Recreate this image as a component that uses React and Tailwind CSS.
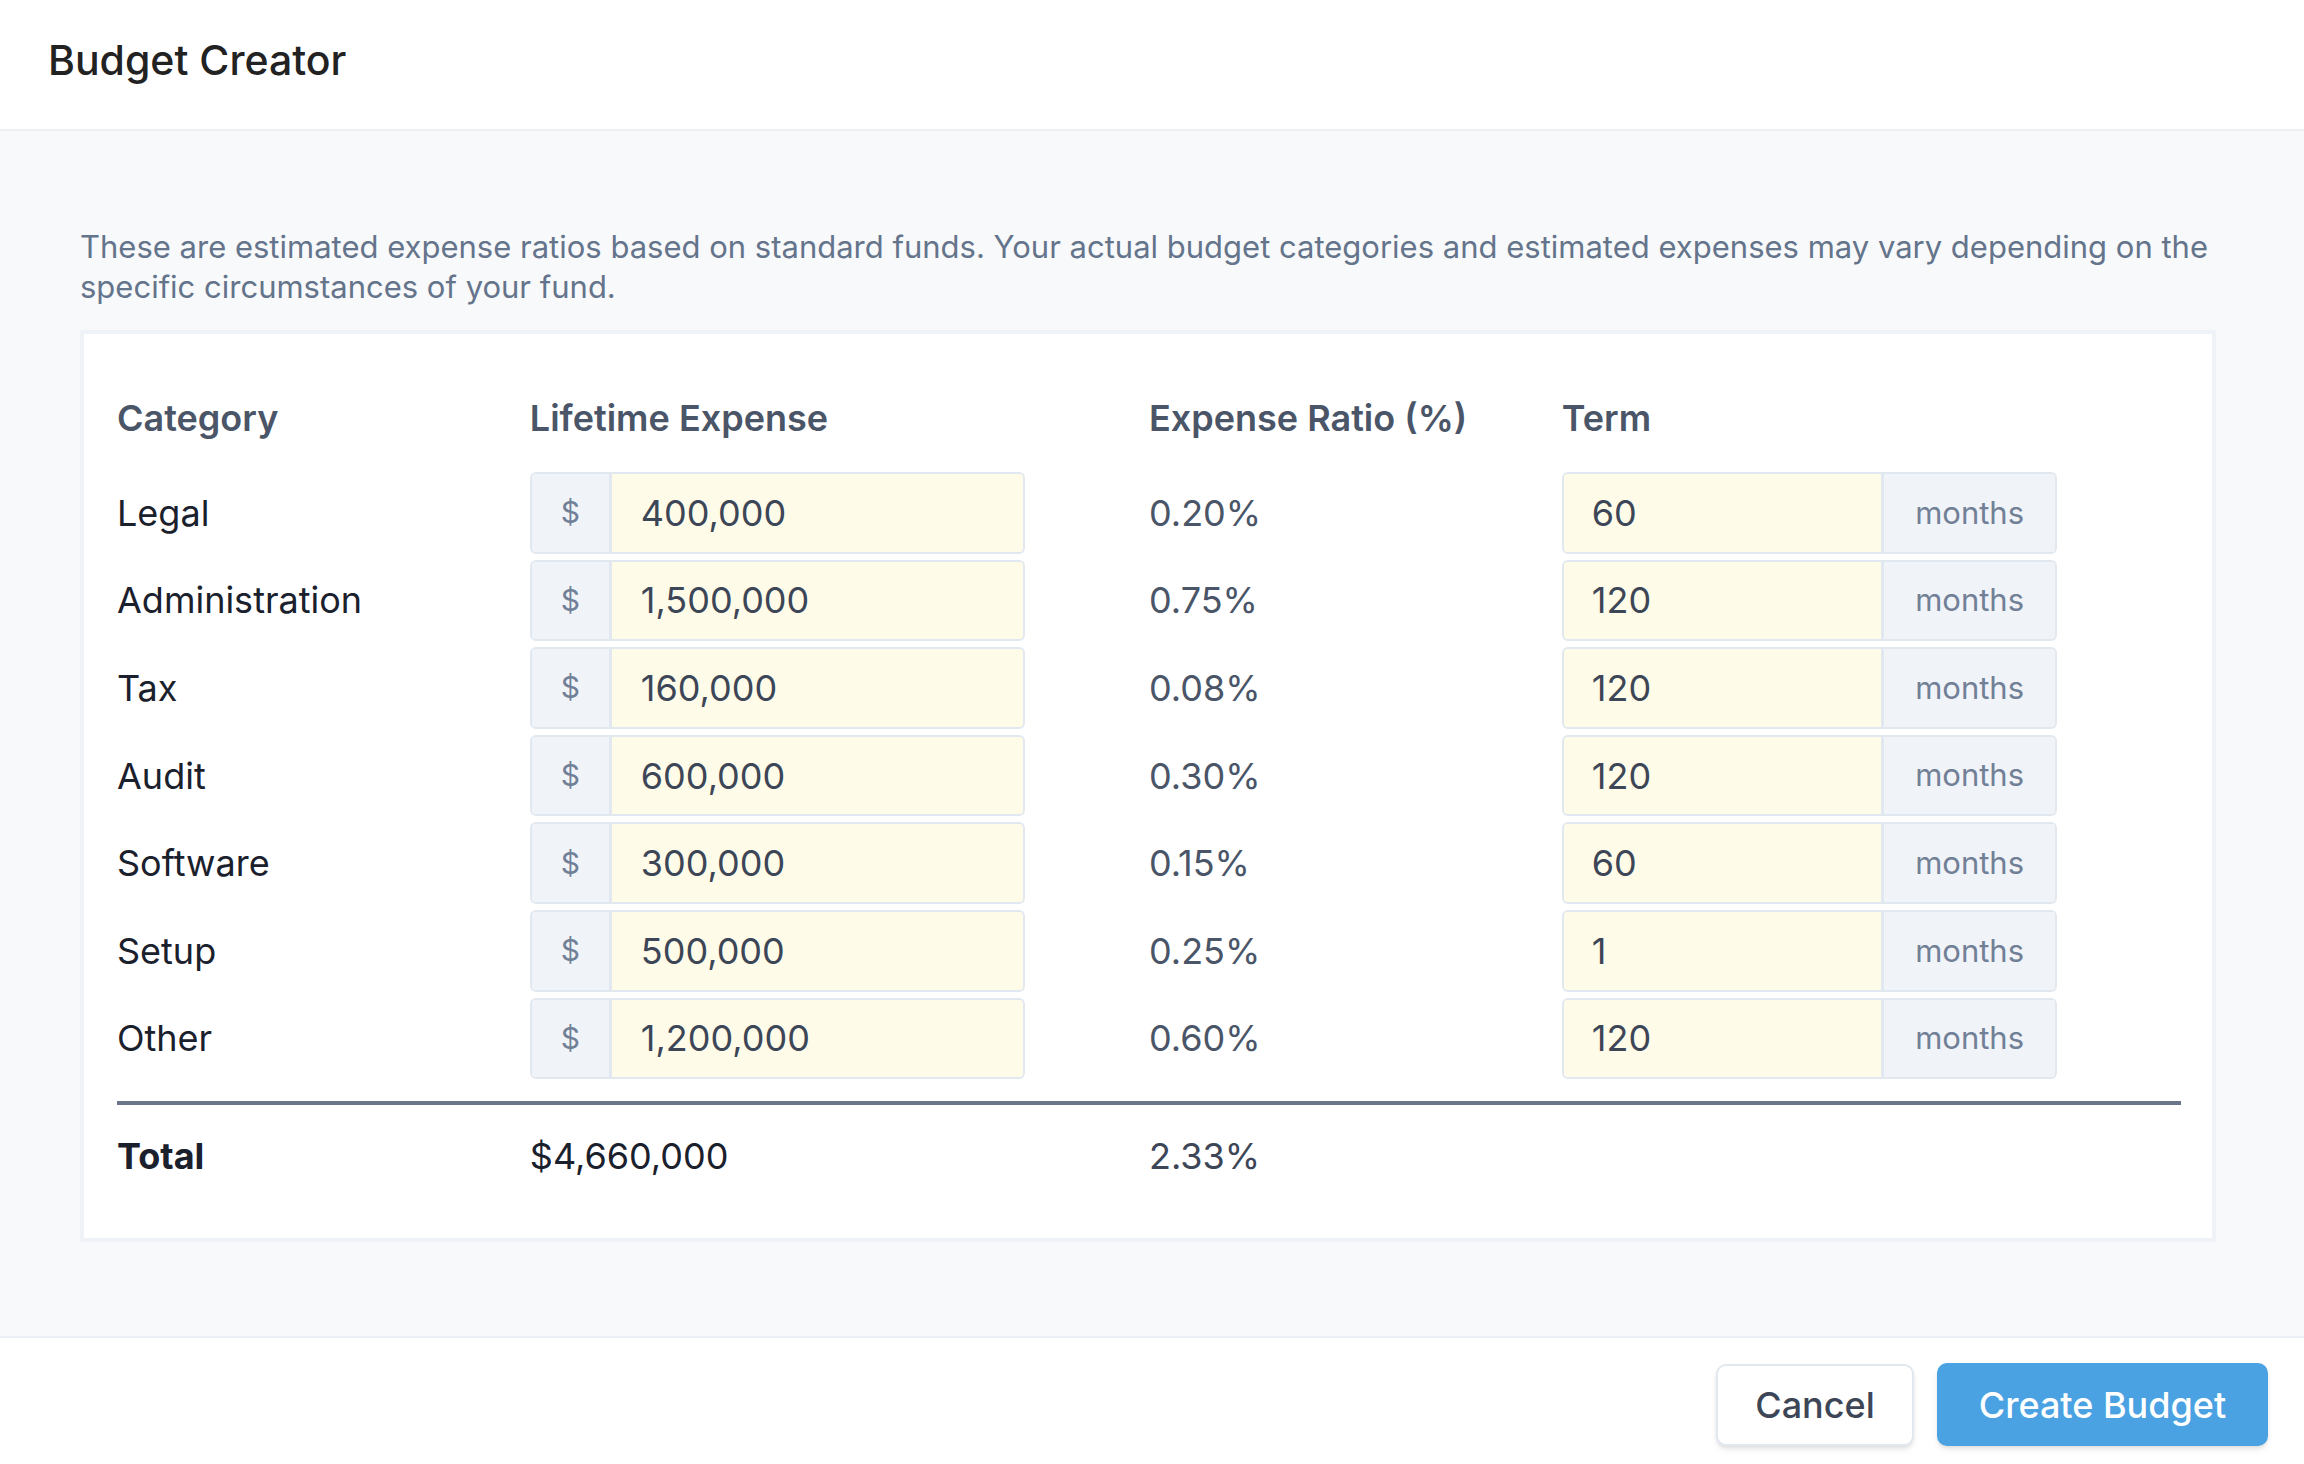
import React from "react";

const rows = [
  { name: "Legal", amt: "400,000", ratio: "0.20%", term: "60" },
  { name: "Administration", amt: "1,500,000", ratio: "0.75%", term: "120" },
  { name: "Tax", amt: "160,000", ratio: "0.08%", term: "120" },
  { name: "Audit", amt: "600,000", ratio: "0.30%", term: "120" },
  { name: "Software", amt: "300,000", ratio: "0.15%", term: "60" },
  { name: "Setup", amt: "500,000", ratio: "0.25%", term: "1" },
  { name: "Other", amt: "1,200,000", ratio: "0.60%", term: "120" },
];

export default function App() {
  return (
    <div className="w-full bg-white font-['Inter',sans-serif]">
      <div className="h-[131px] flex items-center pl-[48px] pb-[8px] border-b-2 border-[#eceff3]">
        <h1 className="text-[41px] font-medium text-[#222222] leading-none">Budget Creator</h1>
      </div>
      <div className="bg-[#f8f9fb] pt-[96px] pb-[94px] pl-[80px] pr-[88px]">
        <p className="text-[31px] leading-[40px] text-[#64748b]">
          These are estimated expense ratios based on standard funds. Your actual budget categories and estimated expenses may vary depending on the
          <br />
          specific circumstances of your fund.
        </p>
        <div className="mt-[23px] bg-white border-4 border-[#eff2f6] pt-[32px] pb-[31px] pl-[33px] pr-[31px]">
          <div className="grid grid-cols-[20%_30%_20%_30%] h-[103px] items-center text-[36px] font-semibold text-[#4a5568]">
            <div>Category</div>
            <div>Lifetime Expense</div>
            <div>Expense Ratio (%)</div>
            <div>Term</div>
          </div>
          {rows.map((r) => (
            <div key={r.name} className="grid grid-cols-[20%_30%_20%_30%] items-center py-[3px]">
              <div className="text-[36px] text-[#1a202c]">{r.name}</div>
              <div>
                <div className="flex w-[80%] h-[81.6px] border-2 border-[#e2e8f0] rounded-[6px] overflow-hidden">
                  <div className="w-[80px] flex items-center justify-center bg-[#f0f3f8] border-r-[3px] border-[#e2e8f0] text-[30px] text-[#718096]">$</div>
                  <div className="flex-1 flex items-center bg-[#fefce9] pl-[29px] text-[36px] text-[#3d4657]">{r.amt}</div>
                </div>
              </div>
              <div className="text-[36px] text-[#4a5568]">{r.ratio}</div>
              <div>
                <div className="flex w-[80%] h-[81.6px] border-2 border-[#e2e8f0] rounded-[6px] overflow-hidden">
                  <div className="flex-1 flex items-center bg-[#fefce9] pl-[28px] text-[36px] text-[#3d4657]">{r.term}</div>
                  <div className="w-[174px] flex items-center justify-center bg-[#f0f3f8] border-l-[3px] border-[#e2e8f0] text-[31px] text-[#718096]">months</div>
                </div>
              </div>
            </div>
          ))}
          <div className="mt-[19px] h-[4px] bg-[#6b7689]" />
          <div className="grid grid-cols-[20%_30%_20%_30%] h-[102px] items-center text-[36px] text-[#1a202c]">
            <div className="font-bold">Total</div>
            <div>$4,660,000</div>
            <div className="text-[#3d4657]">2.33%</div>
            <div />
          </div>
        </div>
      </div>
      <div className="border-t-2 border-[#eceff3] bg-white flex justify-end items-center gap-[23px] pt-[25px] pb-[30px] pr-[36px]">
        <button className="h-[82px] w-[198px] rounded-[10px] border-2 border-[#e2e8f0] bg-white text-[36px] font-medium text-[#3d4657] shadow-md">Cancel</button>
        <button className="h-[83px] w-[331px] rounded-[10px] bg-[#4ba2e2] text-[36px] font-medium text-white shadow-md">Create Budget</button>
      </div>
    </div>
  );
}
